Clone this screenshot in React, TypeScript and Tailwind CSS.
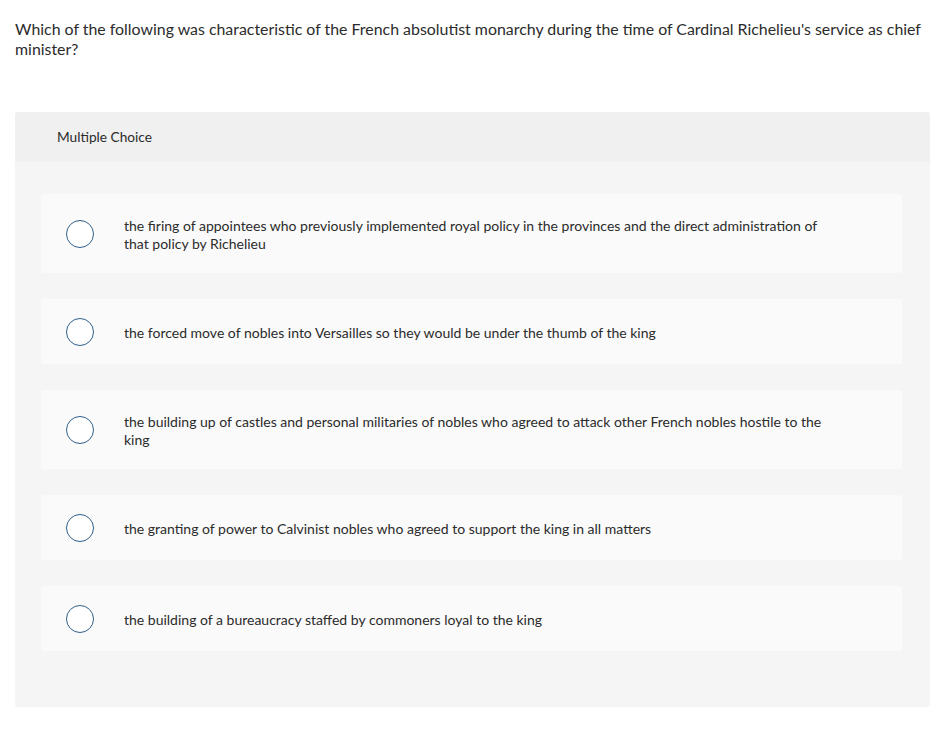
import React from "react";

const options = [
  "the firing of appointees who previously implemented royal policy in the provinces and the direct administration of that policy by Richelieu",
  "the forced move of nobles into Versailles so they would be under the thumb of the king",
  "the building up of castles and personal militaries of nobles who agreed to attack other French nobles hostile to the king",
  "the granting of power to Calvinist nobles who agreed to support the king in all matters",
  "the building of a bureaucracy staffed by commoners loyal to the king",
];

export default function App() {
  return (
    <div
      className="min-h-[743px] bg-white text-[#2b2b2b]"
      style={{ fontFamily: "Lato, 'Noto Sans', sans-serif" }}
    >
      <div className="px-[15px] pt-[19px]">
        <p className="text-[15.9px] leading-[20px] pr-[5px]">
          Which of the following was characteristic of the French absolutist monarchy during the time of Cardinal Richelieu's service as chief minister?
        </p>
      </div>
      <div className="mx-[15px] mt-[53px] w-[915px] rounded-[3px] bg-[#f5f5f5]">
        <div className="flex h-[50px] items-center rounded-t-[3px] bg-[#f0f0f0] pl-[42px] text-[13.7px]">
          Multiple Choice
        </div>
        <div className="flex flex-col gap-[26px] pl-[26px] pr-[28px] pt-[32px] pb-[56px]">
          {options.map((o, i) => (
            <div
              key={i}
              className="flex items-center rounded-[3px] bg-[#fafafa] py-[18px] pl-[25px] pr-[67px]"
            >
              <div className="flex min-h-[29px] items-center">
                <span className="block h-[28px] w-[28px] rounded-full border-[1.5px] border-[#2f5f8d] bg-white" />
              </div>
              <p className="ml-[30px] pt-[5px] pb-[2px] text-[14px] leading-[18px]">{o}</p>
            </div>
          ))}
        </div>
      </div>
    </div>
  );
}
